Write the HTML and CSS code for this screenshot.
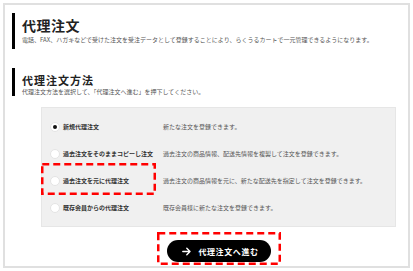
FILE: index.html
```html
<!DOCTYPE html>
<html lang="ja">
<head>
<meta charset="utf-8">
<link rel="stylesheet" href="styles.css">
</head>
<body>
<div class="frame">
  <section class="block block-intro">
    <h1 class="title">代理注文</h1>
    <p class="lead">電話、FAX、ハガキなどで受けた注文を受注データとして登録することにより、らくうるカートで一元管理できるようになります。</p>
  </section>
  <section class="block block-method">
    <h2 class="subtitle">代理注文方法</h2>
    <p class="lead">代理注文方法を選択して、「代理注文へ進む」を押下してください。</p>
  </section>
  <div class="panel">
    <div class="row">
      <span class="radio checked"></span>
      <span class="label">新規代理注文</span>
      <span class="desc">新たな注文を登録できます。</span>
    </div>
    <div class="row">
      <span class="radio"></span>
      <span class="label">過去注文をそのままコピーし注文</span>
      <span class="desc">過去注文の商品情報、配送先情報を複製して注文を登録できます。</span>
    </div>
    <div class="row">
      <span class="radio"></span>
      <span class="label">過去注文を元に代理注文</span>
      <span class="desc">過去注文の商品情報を元に、新たな配送先を指定して注文を登録できます。</span>
      <svg class="mark mark-row" width="115" height="32" viewBox="0 0 115 32"><rect x="1.25" y="1.25" width="112.5" height="29.5"/></svg>
    </div>
    <div class="row">
      <span class="radio"></span>
      <span class="label">既存会員からの代理注文</span>
      <span class="desc">既存会員様に新たな注文を登録できます。</span>
    </div>
  </div>
  <div class="actions">
    <button class="btn" type="button">
      <svg class="arrow" width="9" height="9" viewBox="0 0 9 9"><path d="M0.8 4.5H8M4.8 1.3L8 4.5L4.8 7.7"/></svg>
      <span>代理注文へ進む</span>
      <svg class="mark mark-btn" width="124" height="33" viewBox="0 0 124 33"><rect x="1.25" y="1.25" width="121.5" height="30.5"/></svg>
    </button>
  </div>
</div>
</body>
</html>
```

FILE: styles.css
```css
* { box-sizing: border-box; }
html, body { margin: 0; padding: 0; background: #fff; }
body {
  font-family: "Noto Sans CJK JP", "Noto Sans", sans-serif;
  color: #333;
}
.frame {
  margin: 3px;
  width: 407px;
  height: 265px;
  border: 2px solid #e0e0e0;
  padding: 8px 12px 0 7px;
}
.block {
  border-left: 3px solid #000;
  padding-left: 7px;
}
.block-intro {
  height: 36px;
  padding-top: 3px;
}
.block-method {
  margin-top: 19px;
  height: 28px;
  padding-top: 5px;
}
.title {
  margin: 0;
  font-size: 14px;
  line-height: 19px;
  font-weight: 700;
  letter-spacing: 0.5px;
  color: #222;
}
.subtitle {
  margin: 0;
  font-size: 11px;
  line-height: 15px;
  font-weight: 700;
  letter-spacing: 1px;
  color: #222;
}
.lead {
  margin: 0;
  font-size: 6px;
  line-height: 8px;
  color: #555;
  white-space: nowrap;
}
.block-intro .lead { margin-top: 1px; }
.panel {
  margin: 11px 0 0 29px;
  width: 355px;
  height: 120px;
  background: #f0f0f0;
  border: 1px solid #e6e6e6;
  padding: 5px 0 5px 8px;
}
.row {
  position: relative;
  height: 27px;
  display: grid;
  grid-template-columns: 10px 97px 1fr;
  column-gap: 3px;
  align-items: center;
}
.radio {
  width: 10px;
  height: 10px;
  border-radius: 50%;
  background: #fff;
  border: 1px solid #e4e4e4;
  display: flex;
  align-items: center;
  justify-content: center;
}
.radio.checked::after {
  content: "";
  width: 4px;
  height: 4px;
  border-radius: 50%;
  background: #111;
}
.label {
  font-size: 6px;
  font-weight: 700;
  color: #333;
  white-space: nowrap;
}
.desc {
  font-size: 6px;
  color: #555;
  white-space: nowrap;
}
.mark {
  position: absolute;
  fill: none;
  stroke: #f00;
  stroke-width: 2.5;
  stroke-dasharray: 7 4;
  pointer-events: none;
}
.mark-row { left: -9px; top: -4px; }
.mark-btn { left: -10px; top: -8px; }
.actions {
  margin: 13px 0 0 29px;
  width: 355px;
  display: flex;
  justify-content: center;
}
.btn {
  position: relative;
  width: 104px;
  height: 22px;
  border: 0;
  border-radius: 11px;
  background: #000;
  color: #fff;
  font-family: inherit;
  font-size: 8px;
  font-weight: 700;
  letter-spacing: 0.6px;
  display: flex;
  align-items: center;
  justify-content: center;
  gap: 7px;
  padding: 0 0 0 4px;
}
.arrow {
  fill: none;
  stroke: #fff;
  stroke-width: 1.4;
  stroke-linecap: round;
  stroke-linejoin: round;
}
```
